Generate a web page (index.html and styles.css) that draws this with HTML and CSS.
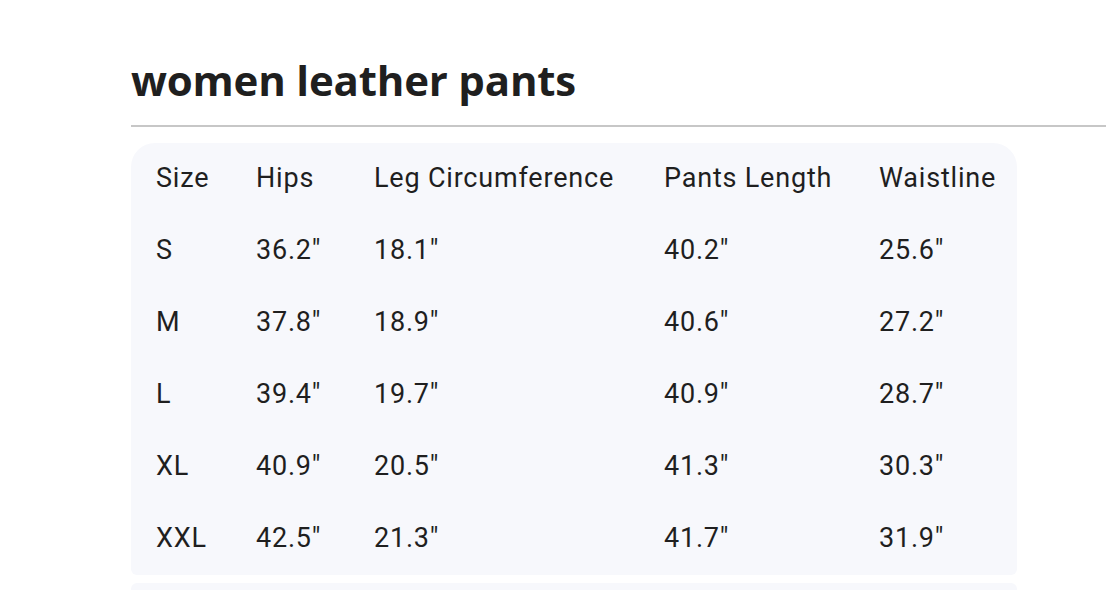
FILE: index.html
```html
<!DOCTYPE html>
<html>
<head>
<meta charset="utf-8">
<link rel="stylesheet" href="styles.css">
</head>
<body>
<div class="page">
  <h1 class="title">women leather pants</h1>
  <div class="rule"></div>
  <div class="card">
    <table class="sizes">
      <colgroup>
        <col class="c1"><col class="c2"><col class="c3"><col class="c4"><col class="c5">
      </colgroup>
      <tr><td>Size</td><td>Hips</td><td>Leg Circumference</td><td>Pants Length</td><td>Waistline</td></tr>
      <tr><td>S</td><td>36.2"</td><td>18.1"</td><td>40.2"</td><td>25.6"</td></tr>
      <tr><td>M</td><td>37.8"</td><td>18.9"</td><td>40.6"</td><td>27.2"</td></tr>
      <tr><td>L</td><td>39.4"</td><td>19.7"</td><td>40.9"</td><td>28.7"</td></tr>
      <tr><td>XL</td><td>40.9"</td><td>20.5"</td><td>41.3"</td><td>30.3"</td></tr>
      <tr><td>XXL</td><td>42.5"</td><td>21.3"</td><td>41.7"</td><td>31.9"</td></tr>
    </table>
  </div>
  <div class="card card-next"></div>
</div>
</body>
</html>
```
FILE: styles.css
```css
html, body {
  margin: 0;
  padding: 0;
  background: #ffffff;
  overflow: hidden;
}
.page {
  margin-left: 131px;
  width: 975px;
  padding-top: 50px;
  font-family: Roboto, "Liberation Sans", sans-serif;
  color: #1f1f1f;
}
.title {
  margin: 0;
  font-family: "Open Sans", Lato, sans-serif;
  font-weight: 700;
  font-size: 42px;
  line-height: 60px;
  letter-spacing: -0.2px;
  color: #1f1f1f;
}
.rule {
  margin-top: 15px;
  height: 2px;
  background: #c7c7c7;
}
.card {
  margin-top: 16px;
  width: 886px;
  background: #f7f8fc;
  border-radius: 24px 24px 6px 6px;
}
.card-next {
  margin-top: 8px;
  height: 40px;
  border-radius: 6px;
}
.sizes {
  width: 886px;
  table-layout: fixed;
  border-collapse: collapse;
  font-size: 27px;
  letter-spacing: 0.8px;
}
.sizes tr {
  height: 72px;
}
.sizes td {
  padding: 0 0 2px 0;
  line-height: 32px;
  vertical-align: middle;
  white-space: nowrap;
}
.c1 { width: 125px; }
.c2 { width: 118px; }
.c3 { width: 290px; }
.c4 { width: 215px; }
.c5 { width: auto; }
.sizes td:first-child {
  padding-left: 25px;
}
```
